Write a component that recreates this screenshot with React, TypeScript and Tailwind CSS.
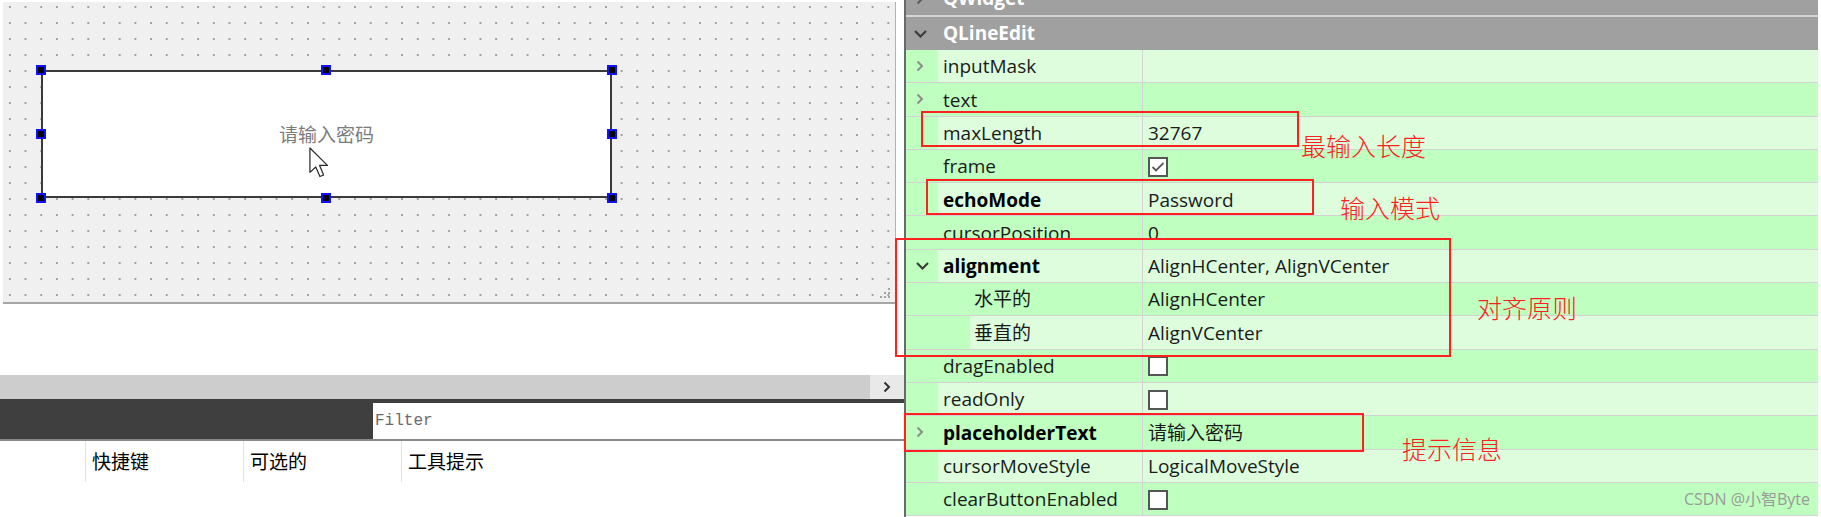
import React from 'react';

type Row = {
  name: string;
  value?: string;
  bold?: boolean;
  check?: boolean;
  arrow?: 'right' | 'down';
  sub?: boolean;
  light: boolean;
};

const ROWS: Row[] = [
  { name: 'inputMask', arrow: 'right', light: true },
  { name: 'text', arrow: 'right', light: false },
  { name: 'maxLength', value: '32767', light: true },
  { name: 'frame', check: true, light: false },
  { name: 'echoMode', value: 'Password', bold: true, light: true },
  { name: 'cursorPosition', value: '0', light: false },
  { name: 'alignment', value: 'AlignHCenter, AlignVCenter', bold: true, arrow: 'down', light: true },
  { name: '水平的', value: 'AlignHCenter', sub: true, light: false },
  { name: '垂直的', value: 'AlignVCenter', sub: true, light: true },
  { name: 'dragEnabled', check: false, light: false },
  { name: 'readOnly', check: false, light: true },
  { name: 'placeholderText', value: '请输入密码', bold: true, arrow: 'right', light: false },
  { name: 'cursorMoveStyle', value: 'LogicalMoveStyle', light: true },
  { name: 'clearButtonEnabled', check: false, light: false },
];

// handle points on the selected line edit (relative to the canvas box)
const HANDLES = [
  [38, 68], [323, 68], [609, 68],
  [38, 132], [609, 132],
  [38, 196], [323, 196], [609, 196],
];

function ChevronRight({ color = '#8c8c8c' }: { color?: string }) {
  return (
    <svg width="8" height="12" viewBox="0 0 8 12">
      <polyline points="1.5,1.5 6,6 1.5,10.5" fill="none" stroke={color} strokeWidth="2" />
    </svg>
  );
}

function ChevronDown() {
  return (
    <svg width="13" height="8" viewBox="0 0 13 8">
      <polyline points="1,1 6.5,6.5 12,1" fill="none" stroke="#3c3c3c" strokeWidth="2.2" />
    </svg>
  );
}

function CheckBox({ checked }: { checked: boolean }) {
  return (
    <div className="w-[20px] h-[20px] border-2 border-[#555555] bg-white flex items-center justify-center">
      {checked && (
        <svg width="14" height="12" viewBox="0 0 14 12">
          <polyline points="1.5,6 5,9.5 12.5,2" fill="none" stroke="#5a5a5a" strokeWidth="1.8" />
        </svg>
      )}
    </div>
  );
}

function PropRow({ row }: { row: Row }) {
  const cell = row.light ? 'bg-[#ddfddd]' : 'bg-[#bfffbf]';
  return (
    <div className="flex h-[33.3px] border-b border-[#d2d2d2] bg-[#bfffbf]">
      <div className="flex w-[237px] shrink-0 border-r border-[#d2d2d2]">
        <div className={`${row.sub ? 'w-[64px]' : 'w-[32px]'} shrink-0 flex items-center pl-[10px]`}>
          {row.arrow === 'right' && <ChevronRight />}
          {row.arrow === 'down' && <ChevronDown />}
        </div>
        <div
          className={`flex-1 flex items-center pt-[1px] ${row.sub ? 'pl-[4px]' : 'pl-[5px]'} ${cell} ${
            row.bold ? 'font-bold text-black' : 'text-[#1a1a1a]'
          }`}
        >
          {row.name}
        </div>
      </div>
      <div className={`flex-1 flex items-center pl-[5px] pt-[1px] text-[#1a1a1a] ${cell}`}>
        {row.check !== undefined ? <CheckBox checked={row.check} /> : row.value}
      </div>
    </div>
  );
}

export default function App() {
  return (
    <div className="relative w-[1821px] h-[517px] overflow-hidden bg-white flex font-['Open_Sans','Noto_Sans_CJK_SC',sans-serif]">
      {/* left: form canvas + action editor */}
      <div className="w-[904px] shrink-0 flex flex-col">
        <div className="pt-[2px] pl-[3px]">
          <div className="relative h-[302px] w-[893px] bg-[#f0f0f0] border-r border-b-2 border-r-[#b4b4b4] border-b-[#a6a6a6] bg-[radial-gradient(circle,#a2a2a2_0.7px,transparent_1.1px)] bg-[length:15.7px_16px] bg-[position:-1px_-3px]">
            {/* selected QLineEdit */}
            <div className="absolute left-[38px] top-[68px] w-[571px] h-[128px] bg-white border-2 border-[#3a3a3a] flex items-center justify-center">
              <span className="text-[19px] text-[#7c7c7c] font-['Noto_Sans_CJK_SC',sans-serif]">请输入密码</span>
            </div>
            {HANDLES.map(([x, y]) => (
              <div
                key={`${x}-${y}`}
                className="absolute w-[10px] h-[10px] bg-black border-2 border-[#1010ff]"
                style={{ left: x - 5, top: y - 5 }}
              />
            ))}
            {/* mouse pointer */}
            <svg className="absolute left-[306px] top-[145px]" width="20" height="31" viewBox="0 0 13 20">
              <path
                d="M0.6 0.6 V16.4 L4.4 12.9 L7.1 19.1 L9.5 18.1 L6.9 11.9 H12 Z"
                fill="white"
                stroke="#2a2a2a"
                strokeWidth="0.8"
                strokeLinejoin="round"
              />
            </svg>
            {/* size grip */}
            <svg className="absolute right-[4px] bottom-[3px]" width="12" height="12" viewBox="0 0 12 12">
              {[[9, 1], [5, 5], [9, 5], [1, 9], [5, 9], [9, 9]].map(([x, y]) => (
                <rect key={`${x}${y}`} x={x} y={y} width="2" height="2" fill="#a4a4a4" />
              ))}
            </svg>
          </div>
        </div>

        <div className="h-[71px]" />

        {/* horizontal scrollbar */}
        <div className="h-[24px] flex bg-[#cdcdcd]">
          <div className="flex-1" />
          <div className="w-[34px] bg-[#e9e9e9] flex items-center justify-center">
            <ChevronRight color="#333333" />
          </div>
        </div>

        {/* filter bar */}
        <div className="h-[42px] flex bg-[#3f3f3f] border-b-2 border-[#8a8a8a]">
          <div className="w-[373px] shrink-0" />
          <div className="flex-1 mt-[4px] bg-white flex items-center pl-[2px] text-[16px] text-[#6a6a6a] font-['Liberation_Mono',monospace]">
            Filter
          </div>
        </div>

        {/* action table header */}
        <div className="h-[41px] flex text-[19px] text-black font-['Noto_Sans_CJK_SC',sans-serif]">
          <div className="w-[86px] border-r border-[#e2e2e2]" />
          <div className="w-[158px] border-r border-[#e2e2e2] flex items-center pl-[6px]">快捷键</div>
          <div className="w-[158px] border-r border-[#e2e2e2] flex items-center pl-[6px]">可选的</div>
          <div className="flex-1 flex items-center pl-[6px]">工具提示</div>
        </div>
      </div>

      {/* right: property editor */}
      <div className="w-[914px] shrink-0 border-l-2 border-[#6a6a6a] flex flex-col text-[19px]">
        <div className="h-[15px] overflow-hidden bg-[#a0a0a0]">
          <div className="-mt-[18px] h-[33px] flex items-center">
            <div className="w-[32px] pl-[10px] flex items-center">
              <ChevronRight color="#5a5a5a" />
            </div>
            <span className="pl-[5px] font-bold text-white">QWidget</span>
          </div>
        </div>
        <div className="h-[2px] bg-[#d4d4d4]" />
        <div className="h-[33px] flex items-center bg-[#a0a0a0]">
          <div className="w-[32px] pl-[8px] flex items-center">
            <ChevronDown />
          </div>
          <span className="pl-[5px] font-bold text-white">QLineEdit</span>
        </div>
        {ROWS.map(r => (
          <PropRow key={r.name} row={r} />
        ))}
      </div>

      {/* annotations */}
      <div className="absolute left-[921px] top-[111px] w-[378px] h-[36px] border-2 border-[#ff2020]" />
      <div className="absolute left-[926px] top-[179px] w-[388px] h-[36px] border-2 border-[#ff2020]" />
      <div className="absolute left-[895px] top-[238px] w-[556px] h-[119px] border-2 border-[#ff2020]" />
      <div className="absolute left-[904px] top-[413px] w-[460px] h-[39px] border-2 border-[#ff2020]" />

      <span className="absolute left-[1301px] top-[131px] text-[25px] leading-[28px] font-light text-[#ff2020] font-['Noto_Sans_CJK_SC',sans-serif]">最输入长度</span>
      <span className="absolute left-[1340px] top-[193px] text-[25px] leading-[28px] font-light text-[#ff2020] font-['Noto_Sans_CJK_SC',sans-serif]">输入模式</span>
      <span className="absolute left-[1477px] top-[293px] text-[25px] leading-[28px] font-light text-[#ff2020] font-['Noto_Sans_CJK_SC',sans-serif]">对齐原则</span>
      <span className="absolute left-[1402px] top-[434px] text-[25px] leading-[28px] font-light text-[#ff2020] font-['Noto_Sans_CJK_SC',sans-serif]">提示信息</span>

      <span className="absolute left-[1684px] top-[488px] text-[16px] leading-[22px] text-[#9a9a9a] font-['Open_Sans','Noto_Sans_CJK_SC',sans-serif]">
        CSDN @小智Byte
      </span>
    </div>
  );
}
